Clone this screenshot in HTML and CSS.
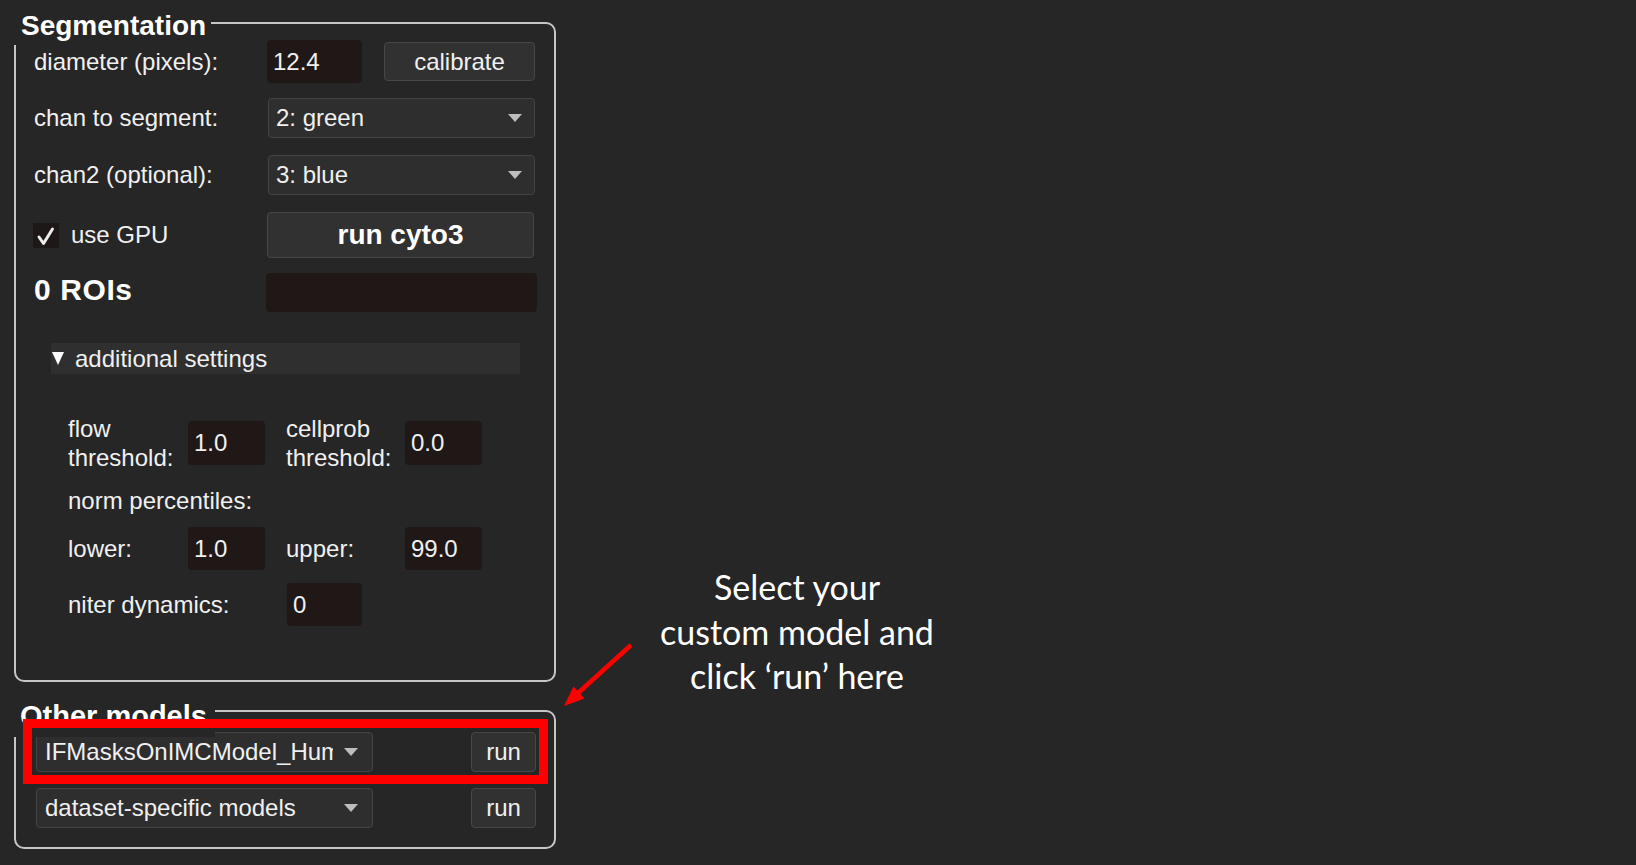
FILE: index.html
```html
<!DOCTYPE html>
<html>
<head>
<meta charset="utf-8">
<link rel="stylesheet" href="styles.css">
</head>
<body>
<div class="page">
  <div class="panel">
    <section class="group seg">
      <h2 class="group-title">Segmentation</h2>
      <div class="row r1">
        <span class="label">diameter (pixels):</span>
        <div class="ctrl">
          <div class="input w95">12.4</div>
          <div class="btn calib">calibrate</div>
        </div>
      </div>
      <div class="row r2">
        <span class="label">chan to segment:</span>
        <div class="combo"><span>2: green</span><i class="caret"></i></div>
      </div>
      <div class="row r3">
        <span class="label">chan2 (optional):</span>
        <div class="combo"><span>3: blue</span><i class="caret"></i></div>
      </div>
      <div class="row r4">
        <span class="label gpu">
          <span class="check"><svg width="26" height="25" viewBox="0 0 26 25"><polyline points="6,14 10.5,20.5 19.5,6" fill="none" stroke="#ececec" stroke-width="3" stroke-linecap="round" stroke-linejoin="round"/></svg></span>
          use GPU
        </span>
        <div class="btn big">run cyto3</div>
      </div>
      <div class="row r5">
        <span class="label rois">0 ROIs</span>
        <div class="input roibox"></div>
      </div>
      <div class="bar"><i class="tri"></i><span>additional settings</span></div>
      <div class="settings">
        <div class="srow s1">
          <span class="slabel">flow<br>threshold:</span>
          <div class="input w77">1.0</div>
          <span class="slabel second">cellprob<br>threshold:</span>
          <div class="input w77">0.0</div>
        </div>
        <div class="srow s2"><span>norm percentiles:</span></div>
        <div class="srow s3">
          <span class="slabel">lower:</span>
          <div class="input w77">1.0</div>
          <span class="slabel second">upper:</span>
          <div class="input w77">99.0</div>
        </div>
        <div class="srow s4">
          <span class="slabel wide">niter dynamics:</span>
          <div class="input w75">0</div>
        </div>
      </div>
    </section>
    <section class="group other">
      <h2 class="group-title">Other models</h2>
      <div class="orow">
        <div class="combo ocombo"><span class="clip">IFMasksOnIMCModel_HumanTissue</span><i class="caret"></i></div>
        <div class="btn run">run</div>
      </div>
      <div class="orow o2">
        <div class="combo ocombo"><span class="clip">dataset-specific models</span><i class="caret"></i></div>
        <div class="btn run">run</div>
      </div>
      <div class="highlight"></div>
    </section>
  </div>
  <div class="note">Select your<br>custom model and<br>click ‘run’ here</div>
  <svg class="arrow" width="90" height="80" viewBox="0 0 90 80">
    <line x1="76" y1="10" x2="22" y2="59" stroke="#ff0000" stroke-width="4.5"/>
    <polygon points="9,71 29.5,63.5 18.5,51.5" fill="#ff0000"/>
  </svg>
</div>
</body>
</html>
```
FILE: styles.css
```css
* { box-sizing: border-box; }

body {
  margin: 0;
  background: #262626;
  font-family: "Liberation Sans", Arial, sans-serif;
  color: #f0f0f0;
  width: 1636px;
  height: 865px;
  overflow: hidden;
}

.page {
  position: relative;
  display: flex;
  align-items: flex-start;
  height: 865px;
}

.panel {
  width: 557px;
  padding-left: 14px;
  padding-top: 22px;
  flex: none;
}

.group {
  position: relative;
  width: 542px;
  border: 2px solid #c6c6c6;
  border-radius: 10px;
}

.seg {
  height: 660px;
  padding-top: 16px;
}

.other {
  margin-top: 28px;
  height: 139px;
  padding-top: 20px;
}

.group-title {
  position: absolute;
  margin: 0;
  left: -4px;
  top: -17px;
  height: 38px;
  line-height: 38px;
  padding: 0 5px 0 9px;
  background: #262626;
  font-size: 28px;
  font-weight: bold;
  color: #ffffff;
  white-space: nowrap;
}

.other .group-title {
  top: -15px;
  padding: 0 8px 2px 8px;
  height: 40px;
  font-size: 29px;
}

.row {
  display: flex;
  align-items: center;
  padding-left: 18px;
}

.label {
  width: 233px;
  font-size: 24px;
  flex: none;
}

.r1 { height: 43px; }
.r2 { margin-top: 15px; height: 40px; }
.r3 { margin-top: 17px; height: 40px; }
.r4 { margin-top: 17px; height: 46px; }
.r5 { margin-top: 15px; height: 39px; }

.ctrl {
  display: flex;
  align-items: center;
  gap: 22px;
}

.input {
  background: #1f1817;
  border-radius: 4px;
  height: 43px;
  font-size: 24px;
  padding-left: 6px;
  display: flex;
  align-items: center;
  flex: none;
}

.w95 { width: 95px; }
.w77 { width: 77px; height: 44px; }
.w75 { width: 75px; }

.btn {
  background: #313131;
  border: 1px solid #474747;
  border-radius: 4px;
  height: 39px;
  display: flex;
  align-items: center;
  justify-content: center;
  font-size: 24px;
  flex: none;
}

.calib { width: 151px; }

.big {
  width: 267px;
  height: 46px;
  margin-left: 1px;
  font-size: 28px;
  font-weight: bold;
  color: #ffffff;
}

.combo {
  width: 267px;
  height: 40px;
  margin-left: 1px;
  background: #2e2e2e;
  border: 1px solid #444444;
  border-radius: 4px;
  padding: 0 12px 0 7px;
  display: flex;
  align-items: center;
  justify-content: space-between;
  font-size: 24px;
  flex: none;
}

.caret {
  width: 0;
  height: 0;
  border-left: 7px solid transparent;
  border-right: 7px solid transparent;
  border-top: 8px solid #bdbdbd;
  flex: none;
}

.gpu {
  display: flex;
  align-items: center;
  gap: 12px;
  margin-left: -1px;
}

.check {
  width: 26px;
  height: 25px;
  background: #1d1817;
  display: block;
  flex: none;
}

.check svg { display: block; }

.rois {
  font-size: 30px;
  letter-spacing: 0.6px;
  font-weight: bold;
  color: #ffffff;
  padding-bottom: 5px;
}

.roibox {
  width: 271px;
  height: 39px;
  margin-left: -1px;
}

.bar {
  margin-top: 31px;
  margin-left: 35px;
  width: 469px;
  height: 31px;
  background: #2f2f2f;
  display: flex;
  align-items: center;
  padding-left: 1px;
  gap: 11px;
  font-size: 24px;
}

.tri {
  width: 0;
  height: 0;
  border-left: 6px solid transparent;
  border-right: 6px solid transparent;
  border-top: 13px solid #ffffff;
}

.settings {
  padding-left: 52px;
}

.srow {
  display: flex;
  align-items: center;
  font-size: 24px;
}

.slabel {
  width: 120px;
  line-height: 29px;
  flex: none;
}

.slabel.second {
  width: 119px;
  margin-left: 21px;
}

.slabel.wide { width: 219px; }

.s1 { margin-top: 47px; height: 44px; }
.s2 { margin-top: 22px; height: 28px; line-height: 28px; }
.s3 { margin-top: 12px; height: 43px; }
.s3 .input { height: 43px; }
.s4 { margin-top: 13px; height: 43px; }

.orow {
  display: flex;
  align-items: center;
  justify-content: space-between;
  padding-left: 20px;
  padding-right: 18px;
  height: 40px;
}

.o2 { margin-top: 16px; }

.ocombo {
  width: 337px;
  margin-left: 0;
  padding: 0 14px 0 8px;
}

.clip {
  width: 288px;
  overflow: hidden;
  white-space: nowrap;
  display: block;
}

.run {
  width: 65px;
  height: 40px;
}

.highlight {
  position: absolute;
  left: 7px;
  top: 7px;
  width: 525px;
  height: 65px;
  border: 9px solid #ff0000;
}

.note {
  margin-left: 60px;
  margin-top: 565px;
  width: 360px;
  text-align: center;
  font-family: Lato, "Open Sans", sans-serif;
  font-size: 34px;
  line-height: 44.5px;
  color: #ffffff;
  flex: none;
}

.arrow {
  position: absolute;
  left: 555px;
  top: 635px;
}
```
